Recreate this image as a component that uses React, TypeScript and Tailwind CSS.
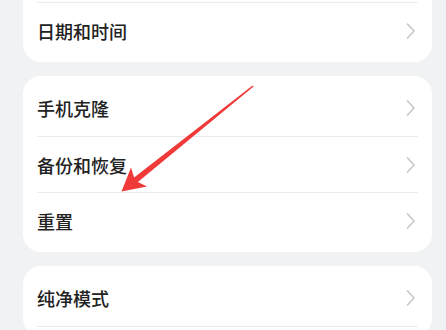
const rows = {
  first: ["日期和时间"],
  second: ["手机克隆", "备份和恢复", "重置"],
  third: ["纯净模式"],
};

function Chevron() {
  return (
    <svg width="10" height="16" viewBox="0 0 10 16" fill="none" className="shrink-0">
      <path d="M1.5 1 L8 8 L1.5 15" stroke="#c6c7ca" strokeWidth="1.6" strokeLinecap="round" strokeLinejoin="round" />
    </svg>
  );
}

function Row({ label, first }: { label: string; first?: boolean }) {
  return (
    <div className={`flex h-[56px] items-center justify-between pr-[2px] ${first ? "" : "border-t border-[#ebebeb]"}`}>
      <span className="text-[18px] font-medium leading-none text-[#222222]">{label}</span>
      <Chevron />
    </div>
  );
}

export default function App() {
  return (
    <div
      className="relative h-[330px] w-[446px] overflow-hidden bg-[#f1f2f4] pl-[23px] pr-[14px]"
      style={{ fontFamily: '"Noto Sans CJK SC", "Noto Sans", sans-serif' }}
    >
      <div className="rounded-b-[18px] bg-white px-[14px] pb-[4px] pt-[2px]">
        <div className="border-t border-[#ebebeb]">
          <div className="flex h-[55px] items-center justify-between pr-[2px]">
            <span className="text-[18px] font-medium leading-none text-[#222222]">{rows.first[0]}</span>
            <Chevron />
          </div>
        </div>
      </div>

      <div className="mt-[14px] rounded-[18px] bg-white px-[14px] py-[4px]">
        {rows.second.map((r, i) => (
          <Row key={r} label={r} first={i === 0} />
        ))}
      </div>

      <div className="mt-[14px] rounded-[18px] bg-white px-[14px] pt-[4px]">
        {rows.third.map((r) => (
          <Row key={r} label={r} first />
        ))}
        <div className="h-[10px] border-t border-[#ebebeb]" />
      </div>

      <svg className="pointer-events-none absolute left-0 top-0" width="446" height="330" viewBox="0 0 446 330">
        <polygon
          points="253.6,86.6 137.9,182.1 147,186.5 121.5,191.5 131,167.5 134.1,177.4 252.6,85.4"
          fill="#f03a3a"
        />
      </svg>
    </div>
  );
}
